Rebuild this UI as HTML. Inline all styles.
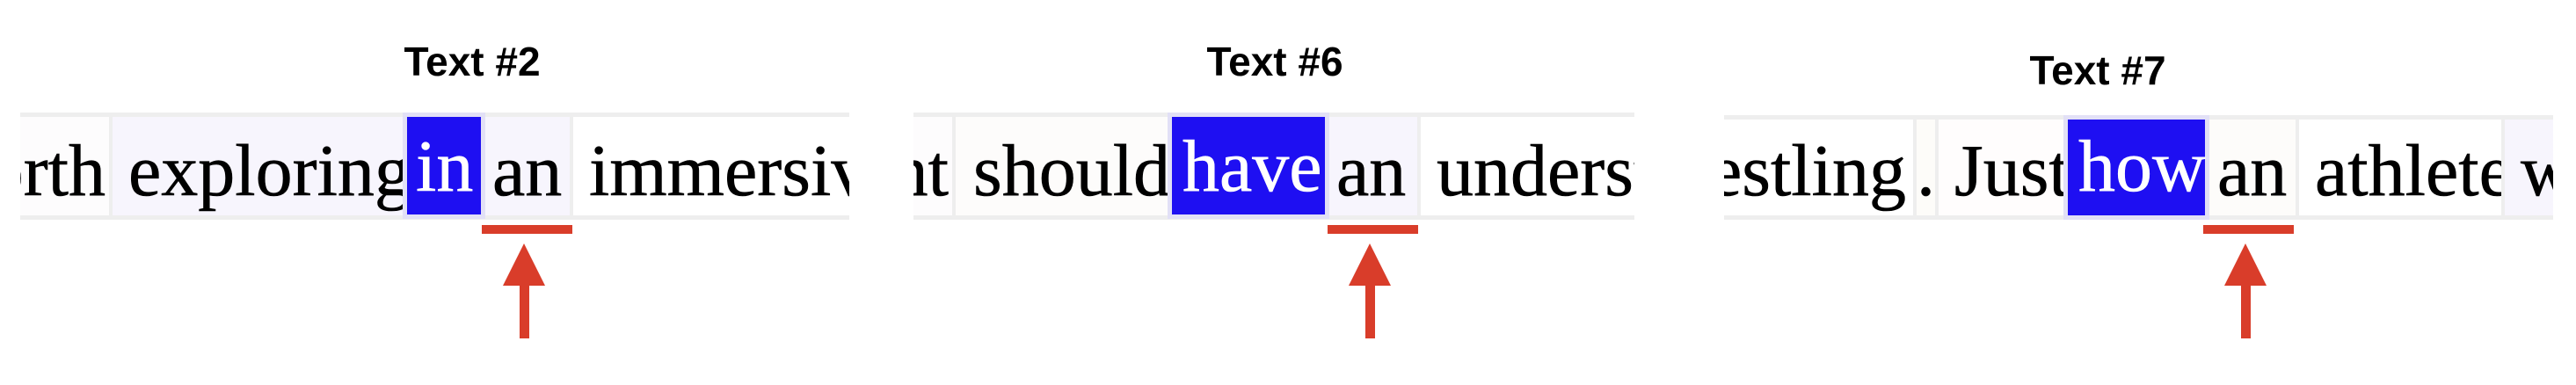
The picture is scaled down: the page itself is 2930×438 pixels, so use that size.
<!DOCTYPE html>
<html><head><meta charset="utf-8"><style>
html,body{margin:0;padding:0;background:#fff;width:2930px;height:438px;overflow:hidden;position:relative}
.t{position:absolute;font-family:"Liberation Sans",sans-serif;font-weight:bold;font-size:46px;line-height:53px;white-space:nowrap;transform:translateX(-50%)}
.strip{position:absolute;overflow:hidden;background:#fff}
.band{position:absolute;left:0;right:0;height:5px;background:#eeeeee}
.c{position:absolute;top:0;bottom:0;box-sizing:border-box;border-left:4px solid #eeeeee;}
.w{position:absolute;top:0;font-family:"Liberation Serif",serif;font-size:84px;line-height:90px;white-space:nowrap;-webkit-text-stroke:0.6px currentColor}
.hl{position:absolute;background:#1e0ff2;outline:5px solid #e2e0f6}
.bar{position:absolute;height:10px;background:#d93d2a}
</style></head><body>

<div class="t" style="left:537px;top:44px">Text #2</div>
<div class="t" style="left:1450px;top:44px">Text #6</div>
<div class="t" style="left:2386px;top:54px">Text #7</div>

<!-- panel 1 -->
<div class="strip" style="left:23px;top:128px;width:943px;height:122px">
  <div class="band" style="top:0"></div><div class="band" style="bottom:0"></div>
  <div class="c" style="left:0;width:101px;top:5px;bottom:5px;border-left:0;background:#fdfcfd"><div class="w" style="right:4px;top:17px">orth</div></div>
  <div class="c" style="left:101px;width:335px;top:5px;bottom:5px;background:#f7f5fd"><div class="w" style="left:18px;top:17px">exploring</div></div>
  <div class="c" style="left:527px;width:100px;top:5px;bottom:5px;background:#f7f5fd;border-left:0"><div class="w" style="left:10px;top:17px">an</div></div>
  <div class="c" style="left:625px;width:318px;top:5px;bottom:5px;background:#fff"><div class="w" style="left:18px;top:17px">immersive</div></div>
  <div class="hl" style="left:440px;top:5px;width:84px;height:111px"><div class="w" style="left:10px;top:12px;color:#fff">in</div></div>
</div>
<div class="bar" style="left:548px;top:256px;width:103px"></div>

<!-- panel 2 -->
<div class="strip" style="left:1039px;top:128px;width:820px;height:122px">
  <div class="band" style="top:0"></div><div class="band" style="bottom:0"></div>
  <div class="c" style="left:0;width:44px;top:5px;bottom:5px;border-left:0;background:#fdfcfd"><div class="w" style="right:4px;top:17px">nt</div></div>
  <div class="c" style="left:44px;width:245px;top:5px;bottom:5px;background:#fdfcfb"><div class="w" style="left:20px;top:17px">should</div></div>
  <div class="c" style="left:471px;width:102px;top:5px;bottom:5px;background:#f7f5fd;border-left:0"><div class="w" style="left:10px;top:17px">an</div></div>
  <div class="c" style="left:573px;width:247px;top:5px;bottom:5px;background:#fff"><div class="w" style="left:18px;top:17px">understand</div></div>
  <div class="hl" style="left:294px;top:5px;width:174px;height:111px"><div class="w" style="left:12px;top:12px;color:#fff">have</div></div>
</div>
<div class="bar" style="left:1510px;top:256px;width:103px"></div>

<!-- panel 3 -->
<div class="strip" style="left:1961px;top:131px;width:943px;height:119px">
  <div class="band" style="top:0"></div><div class="band" style="bottom:0"></div>
  <div class="c" style="left:0;width:215px;top:5px;bottom:5px;border-left:0;background:#fff"><div class="w" style="right:8px;top:14px">estling</div></div>
  <div class="c" style="left:215px;width:25px;top:5px;bottom:5px;background:#fdfcf9"><div class="w" style="left:0px;top:14px">.</div></div>
  <div class="c" style="left:240px;width:147px;top:5px;bottom:5px;background:#fffdfd"><div class="w" style="left:18px;top:14px">Just</div></div>
  <div class="c" style="left:547px;width:103px;top:5px;bottom:5px;background:#fdfcfa;border-left:0"><div class="w" style="left:14px;top:14px">an</div></div>
  <div class="c" style="left:650px;width:234px;top:5px;bottom:5px;background:#fff"><div class="w" style="left:18px;top:14px">athlete</div></div>
  <div class="c" style="left:884px;width:59px;top:5px;bottom:5px;background:#f7f5fd"><div class="w" style="left:18px;top:14px">would</div></div>
  <div class="hl" style="left:391px;top:5px;width:156px;height:109px"><div class="w" style="left:12px;top:9px;color:#fff">how</div></div>
</div>
<div class="bar" style="left:2506px;top:256px;width:103px"></div>

<svg style="position:absolute;left:0;top:0" width="2930" height="438">
  <g fill="#d93d2a">
    <polygon points="596,277 572,325 620,325"/><rect x="591" y="324" width="11" height="61"/>
    <polygon points="1558,277 1534,325 1582,325"/><rect x="1553" y="324" width="11" height="61"/>
    <polygon points="2554,277 2530,325 2578,325"/><rect x="2549" y="324" width="11" height="61"/>
  </g>
</svg>
</body></html>
